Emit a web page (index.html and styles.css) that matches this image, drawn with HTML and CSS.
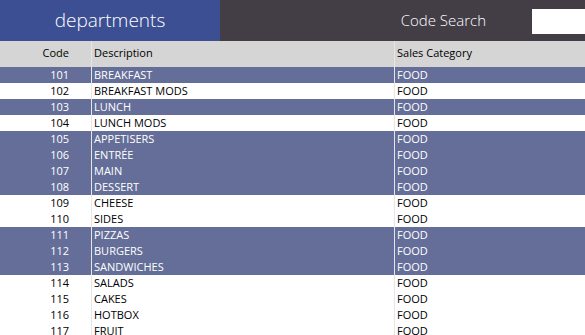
FILE: index.html
```html
<!DOCTYPE html>
<html lang="en">
<head>
    <meta charset="UTF-8">
    <title>Departments</title>
    <link rel="stylesheet" href="styles.css">
</head>
<body>
    <header class="topbar">
        <div class="title">departments</div>
        <div class="search">
            <span>Code Search</span>
            <input type="text" class="search-input">
        </div>
    </header>

    <div class="grid">
        <div class="row head">
            <div class="code">Code</div>
            <div class="desc">Description</div>
            <div class="cat">Sales Category</div>
        </div>
        <div class="row sel"><div class="code">101</div><div class="desc">BREAKFAST</div><div class="cat">FOOD</div></div>
        <div class="row"><div class="code">102</div><div class="desc">BREAKFAST MODS</div><div class="cat">FOOD</div></div>
        <div class="row sel"><div class="code">103</div><div class="desc">LUNCH</div><div class="cat">FOOD</div></div>
        <div class="row"><div class="code">104</div><div class="desc">LUNCH MODS</div><div class="cat">FOOD</div></div>
        <div class="row sel"><div class="code">105</div><div class="desc">APPETISERS</div><div class="cat">FOOD</div></div>
        <div class="row sel"><div class="code">106</div><div class="desc">ENTRÉE</div><div class="cat">FOOD</div></div>
        <div class="row sel"><div class="code">107</div><div class="desc">MAIN</div><div class="cat">FOOD</div></div>
        <div class="row sel"><div class="code">108</div><div class="desc">DESSERT</div><div class="cat">FOOD</div></div>
        <div class="row"><div class="code">109</div><div class="desc">CHEESE</div><div class="cat">FOOD</div></div>
        <div class="row"><div class="code">110</div><div class="desc">SIDES</div><div class="cat">FOOD</div></div>
        <div class="row sel"><div class="code">111</div><div class="desc">PIZZAS</div><div class="cat">FOOD</div></div>
        <div class="row sel"><div class="code">112</div><div class="desc">BURGERS</div><div class="cat">FOOD</div></div>
        <div class="row sel"><div class="code">113</div><div class="desc">SANDWICHES</div><div class="cat">FOOD</div></div>
        <div class="row"><div class="code">114</div><div class="desc">SALADS</div><div class="cat">FOOD</div></div>
        <div class="row"><div class="code">115</div><div class="desc">CAKES</div><div class="cat">FOOD</div></div>
        <div class="row"><div class="code">116</div><div class="desc">HOTBOX</div><div class="cat">FOOD</div></div>
        <div class="row"><div class="code">117</div><div class="desc">FRUIT</div><div class="cat">FOOD</div></div>
    </div>
</body>
</html>
```

FILE: styles.css
```css
body {
    margin: 0;
    font-family: "Open Sans", "Noto Sans", sans-serif;
    background-color: white;
    overflow: hidden;
}
.topbar {
    display: flex;
    height: 41px;
    background-color: #433d46;
    color: white;
}
.title {
    width: 220px;
    background-color: #3c4f93;
    display: flex;
    align-items: center;
    justify-content: center;
    font-size: 19px;
    font-weight: 300;
    padding-bottom: 2px;
    box-sizing: border-box;
}
.search {
    flex: 1;
    display: flex;
    align-items: center;
    justify-content: flex-end;
    font-size: 15px;
    font-weight: 300;
}
.search span {
    margin-right: 46px;
    padding-bottom: 2px;
}
.search-input {
    width: 53px;
    height: 25px;
    border: none;
    padding: 0;
    margin-top: 1px;
    background-color: white;
}
.row {
    display: flex;
    height: 16px;
    line-height: 16px;
    font-size: 11px;
    color: black;
}
.row.head {
    height: 26px;
    line-height: 24px;
    background-color: #d5d5d5;
}
.row.sel {
    background-color: #646e98;
    color: white;
}
.code {
    width: 92px;
    box-sizing: border-box;
    padding-right: 22px;
    text-align: right;
    border-right: 1px solid #e6e6e6;
}
.desc {
    width: 300px;
    padding-left: 2px;
    border-right: 1px solid #e6e6e6;
}
.cat {
    padding-left: 2px;
}
```
